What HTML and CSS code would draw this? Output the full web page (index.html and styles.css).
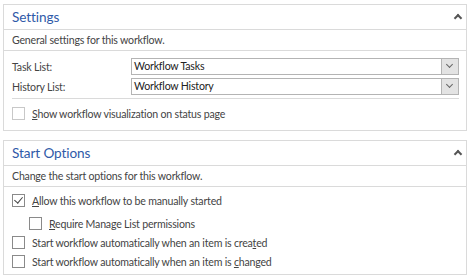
FILE: index.html
```html
<!DOCTYPE html>
<html lang="en">
  <head>
    <meta charset="UTF-8" />
    <title>Workflow Settings</title>
    <link rel="stylesheet" href="styles.css">
  </head>
  <body>
    <div class="panel">
      <div class="panel-head">
        <h2>Settings</h2>
        <span class="chev"></span>
      </div>
      <div class="panel-desc">General settings for this workflow.</div>
      <div class="panel-body">
        <div class="field">
          <label>Task List:</label>
          <div class="select"><span>Workflow Tasks</span><span class="drop"></span></div>
        </div>
        <div class="field">
          <label>History List:</label>
          <div class="select"><span>Workflow History</span><span class="drop"></span></div>
        </div>
        <div class="sep"></div>
        <div class="check disabled"><span class="box"></span><span><u>S</u>how workflow visualization on status page</span></div>
      </div>
    </div>

    <div class="panel">
      <div class="panel-head">
        <h2>Start Options</h2>
        <span class="chev"></span>
      </div>
      <div class="panel-desc">Change the start options for this workflow.</div>
      <div class="panel-body opts">
        <div class="check first"><span class="box checked"></span><span><u>A</u>llow this workflow to be manually started</span></div>
        <div class="check indent"><span class="box"></span><span><u>R</u>equire Manage List permissions</span></div>
        <div class="check"><span class="box"></span><span>Start workflow automatically when an item is crea<u>t</u>ed</span></div>
        <div class="check"><span class="box"></span><span>Start workflow automatically when an item is <u>c</u>hanged</span></div>
      </div>
    </div>
  </body>
</html>
```

FILE: styles.css
```css
body {
  margin: 0;
  padding: 4px 5px 0 3px;
  background: #fff;
  font-family: Lato, "Open Sans", sans-serif;
  font-size: 10.6px;
  letter-spacing: -0.2px;
  color: #444;
}
.panel {
  border: 1px solid #dadada;
  margin-bottom: 9px;
}
.panel-head {
  display: flex;
  align-items: center;
  justify-content: space-between;
  height: 24px;
  padding: 0 8px;
  border-bottom: 1px solid #dadada;
}
.panel-head h2 {
  margin: 0;
  font-weight: normal;
  font-size: 13.6px;
  letter-spacing: -0.1px;
  color: #2f5aa8;
}
.chev {
  width: 4px;
  height: 4px;
  border-left: 2px solid #555;
  border-top: 2px solid #555;
  transform: rotate(45deg);
  margin-top: 2px;
  margin-right: -3px;
}
.panel-desc {
  height: 20px;
  line-height: 20px;
  padding: 0 8px;
  border-bottom: 1px solid #dadada;
}
.panel-body {
  padding: 7px 7px 7px 8px;
}
.field {
  display: flex;
  align-items: center;
  height: 17px;
  margin-bottom: 3px;
}
.field label {
  width: 119px;
}
.select {
  flex: 1;
  display: flex;
  justify-content: space-between;
  height: 15px;
  border: 1px solid #b4b4b4;
  line-height: 15px;
  color: #222;
}
.select span:first-child {
  padding-left: 2px;
}
.drop {
  width: 16px;
  background: #e3e3e3;
  border-left: 1px solid #b4b4b4;
  position: relative;
}
.drop::after {
  content: "";
  position: absolute;
  left: 5px;
  top: 3px;
  width: 4px;
  height: 4px;
  border-right: 1px solid #666;
  border-bottom: 1px solid #666;
  transform: rotate(45deg);
}
.sep {
  border-top: 1px solid #dadada;
  margin: 2px 0 5px;
}
.check {
  display: flex;
  align-items: center;
  gap: 7px;
  height: 19px;
}
.box {
  width: 11px;
  height: 11px;
  border: 1px solid #8a8a8a;
  position: relative;
}
.disabled .box {
  border-color: #c8c8c8;
}
.box.checked::after {
  content: "";
  position: absolute;
  left: 3px;
  top: 0;
  width: 4px;
  height: 7px;
  border-right: 1px solid #444;
  border-bottom: 1px solid #444;
  transform: rotate(40deg);
}
.indent {
  margin-left: 17px;
}
.opts {
  padding: 4px 7px 3px 8px;
}
.opts .first {
  margin-bottom: 4px;
}
```
